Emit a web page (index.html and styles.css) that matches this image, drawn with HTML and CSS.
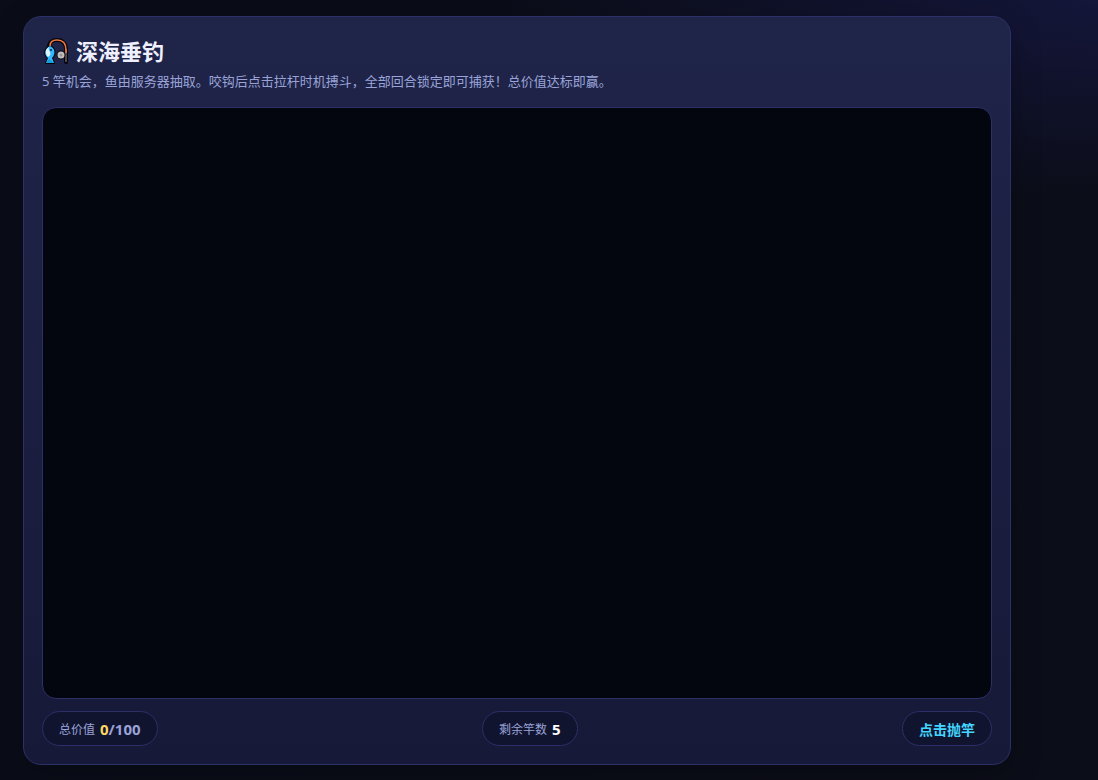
FILE: index.html
```
<!DOCTYPE html>
<html lang="zh-CN">
<head>
  <meta charset="UTF-8">
  <meta name="viewport" content="width=device-width, initial-scale=1.0">
  <title>深海垂钓</title>
  <link rel="stylesheet" href="styles.css">
</head>
<body>

  <main class="page">
    <section class="card">
      <h1 class="title">
        <svg class="title-icon" viewBox="0 0 28 28" aria-hidden="true">
          <path d="M7 10C7 5 11 3 15 3c6 0 9 4 9 10v12" fill="none" stroke="#05060c" stroke-width="4" stroke-linecap="round"/>
          <path d="M8 9c-6 3-6 9-2 12l-2 5h8l-2-5c4-4 3-10-2-12z" fill="#05060c" stroke="#05060c" stroke-width="2" stroke-linejoin="round"/>
          <path d="M24 12v13" stroke="#51474b" stroke-width="2"/>
          <path d="M8 9C8 5 11 3 15 3c6 0 9 4 9 10v3" fill="none" stroke="#ee7442" stroke-width="1.6"/>
          <path d="M8 9c5 2 6 8 2 12l2 5H4l2-5C2 18 2 12 8 9z" fill="#35b7ff"/>
          <path d="M7 10c-4 2-4 7-1 10 2-1 3-3 2-5-1-2-2-3-1-5z" fill="#e4f4ff"/>
          <path d="M4 26l3-4 5 4z" fill="#159de4"/>
          <circle cx="9" cy="13" r="1" fill="#102444"/>
          <circle cx="19" cy="18" r="4.4" fill="#05060c"/>
          <circle cx="19" cy="18" r="3.5" fill="#c3c1bf"/>
          <circle cx="19" cy="18" r="1.6" fill="#999795"/>
        </svg>
        深海垂钓
      </h1>
      <p class="desc">5 竿机会，鱼由服务器抽取。咬钩后点击拉杆时机搏斗，全部回合锁定即可捕获！总价值达标即赢。</p>

      <canvas class="stage" id="stage"></canvas>

      <div class="hud">
        <div class="pill">总价值 <b><span class="gold">0</span>/100</b></div>
        <div class="pill">剩余竿数 <b class="white">5</b></div>
        <button class="pill cast-btn" type="button">点击抛竿</button>
      </div>
    </section>
  </main>

</body>
</html>
```
FILE: styles.css
```
* {
  box-sizing: border-box;
}
body {
  margin: 0;
  min-height: 100vh;
  font-family: "Noto Sans", "Noto Sans CJK SC", sans-serif;
  color: #9aa3d8;
  background:
    radial-gradient(ellipse 600px 200px at 100% 0, #14163a, transparent),
    linear-gradient(90deg, #0a0d18, #0b0d18);
}
.page {
  padding: 16px 87px 15px 23px;
}
.card {
  padding: 18px;
  border: 1px solid #2d2f68;
  border-radius: 18px;
  background: linear-gradient(180deg, #1f2449, #171938);
  box-shadow: 0 8px 30px rgba(0, 0, 0, 0.25);
}
.title {
  display: flex;
  align-items: center;
  gap: 6px;
  margin: 0 0 4px;
  font-size: 22px;
  line-height: 32px;
  color: #eef0ff;
}
.title-icon {
  width: 28px;
  height: 28px;
}
.desc {
  margin: 0 0 16px;
  font-size: 13px;
  line-height: 20px;
}
.stage {
  display: block;
  width: 100%;
  aspect-ratio: 950 / 592;
  border: 1px solid #2d2f68;
  border-radius: 14px;
  background: #03060e;
}
.hud {
  display: flex;
  justify-content: space-between;
  margin-top: 12px;
}
.pill {
  display: flex;
  align-items: center;
  gap: 5px;
  height: 35px;
  padding: 0 16px;
  border: 1px solid #2d2f68;
  border-radius: 18px;
  background: #11142e;
  font-size: 12px;
}
.pill b {
  font-size: 15px;
}
.gold {
  color: #ffd75e;
}
.white {
  color: #fff;
}
.cast-btn {
  font-family: inherit;
  font-size: 14px;
  font-weight: bold;
  color: #43d5ff;
  cursor: pointer;
}
```
